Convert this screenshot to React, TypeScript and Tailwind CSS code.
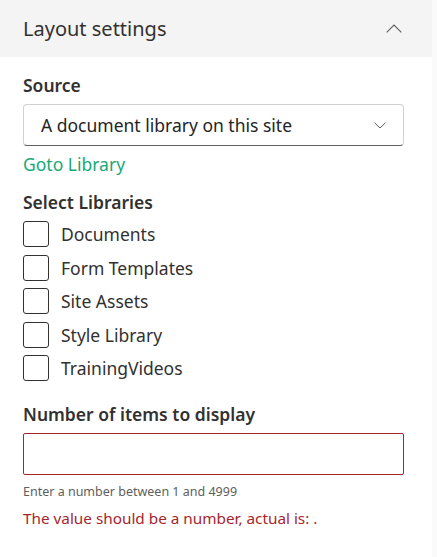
import React from "react";

const libs = ["Documents", "Form Templates", "Site Assets", "Style Library", "TrainingVideos"];

export default function App() {
  return (
    <div className="flex h-[557px] w-[437px] bg-white font-['Noto_Sans',sans-serif] text-[#323130]">
      <div className="flex w-[432px] flex-col">
        <div className="flex h-[57px] items-center justify-between bg-[#f4f4f4] pl-[23px] pr-[30px]">
          <span className="text-[20px] leading-[28px] text-[#323130]">Layout settings</span>
          <svg width="16" height="9" viewBox="0 0 16 9" className="mb-[1px]">
            <path d="M0.7 8.3 L8 1 L15.3 8.3" fill="none" stroke="#605e5c" strokeWidth="1.1" />
          </svg>
        </div>
        <div className="flex flex-col px-[23px] pt-[16px]">
          <div className="h-[24px] text-[17.5px] font-semibold leading-[24px]">Source</div>
          <div className="mt-[7px] flex h-[42px] w-[381px] items-center justify-between rounded-[4px] border border-[#d1d1d1] border-b-[#616161] pl-[17px] pr-[17px]">
            <span className="text-[17.5px] leading-[24px] text-[#242424]">A document library on this site</span>
            <svg width="12" height="7" viewBox="0 0 12 7">
              <path d="M0.5 0.8 L6 6 L11.5 0.8" fill="none" stroke="#605e5c" strokeWidth="1" />
            </svg>
          </div>
          <div className="mt-[6px] h-[24px] text-[17.5px] leading-[24px] text-[#17a978]">Goto Library</div>
          <div className="mt-[14px] h-[24px] text-[17.5px] font-semibold leading-[24px]">Select Libraries</div>
          <div className="mt-[7px] flex flex-col gap-[7.5px]">
            {libs.map((l) => (
              <div key={l} className="flex h-[26px] items-center gap-[12px]">
                <div className="h-[26px] w-[26px] rounded-[3px] border border-[#323130]" />
                <span className="text-[17.5px] leading-[24px] text-[#323130]">{l}</span>
              </div>
            ))}
          </div>
          <div className="mt-[21px] h-[24px] text-[17.5px] font-semibold leading-[24px]">Number of items to display</div>
          <div className="mt-[7px] h-[42px] w-[381px] rounded-[2px] border border-[#a4262c]" />
          <div className="mt-[9px] h-[16px] text-[12.5px] leading-[16px] text-[#605e5c]">
            Enter a number between 1 and 4999
          </div>
          <div className="mt-[8px] h-[20px] text-[15.3px] leading-[20px] text-[#a4262c]">
            The value should be a number, actual is: .
          </div>
        </div>
      </div>
      <div className="w-[5px] bg-[#fafafa]" />
    </div>
  );
}
